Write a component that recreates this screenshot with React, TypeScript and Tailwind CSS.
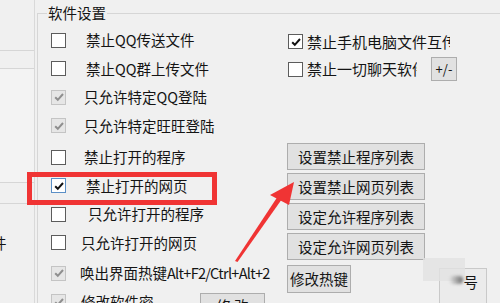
import React from 'react';

type CheckState = 'off' | 'on' | 'disabled' | 'focus';

const leftRows: { label: React.ReactNode; state: CheckState; row: string; text: string; extra?: boolean }[] = [
  { label: '禁止QQ传送文件', state: 'off', row: '', text: 'ml-[20px]' },
  { label: '禁止QQ群上传文件', state: 'off', row: '', text: 'ml-[20px]' },
  { label: '只允许特定QQ登陆', state: 'disabled', row: '', text: 'ml-[18px]' },
  { label: '只允许特定旺旺登陆', state: 'disabled', row: '', text: 'ml-[18px]' },
  { label: '禁止打开的程序', state: 'off', row: 'mt-[3px]', text: 'ml-[18px]' },
  { label: '禁止打开的网页', state: 'focus', row: '', text: 'ml-[20px]' },
  { label: '只允许打开的程序', state: 'off', row: '', text: 'ml-[22px]' },
  { label: '只允许打开的网页', state: 'off', row: '', text: 'ml-[15px]' },
  {
    label: (
      <>
        唤出界面热键<span className="tracking-[-0.7px]">Alt+F2/Ctrl+Alt+2</span>
      </>
    ),
    state: 'disabled',
    row: 'mt-[2px]',
    text: 'ml-[14px]',
  },
  { label: '修改软件密', state: 'disabled', row: '', text: 'ml-[15px] w-[119px]', extra: true },
];

const listButtons = ['设置禁止程序列表', '设置禁止网页列表', '设定允许程序列表', '设定允许网页列表'];

const CheckBox: React.FC<{ state: CheckState }> = ({ state }) => {
  const box =
    state === 'disabled'
      ? 'border-[#c4c4c4] bg-[#e6e6e6]'
      : state === 'focus'
        ? 'border-[#5b8fc6] bg-white'
        : 'border-[#5c5c5c] bg-white';
  const stroke = state === 'disabled' ? '#8f8f8f' : '#111';
  return (
    <div className={`w-[15px] h-[15px] shrink-0 border flex items-center justify-center ${box}`}>
      {state !== 'off' && (
        <svg width="12" height="12" viewBox="0 0 12 12">
          <path d="M2.2 6.2 L4.8 8.8 L10 3" fill="none" stroke={stroke} strokeWidth="2" />
        </svg>
      )}
    </div>
  );
};

const WinButton: React.FC<{ className?: string; children: React.ReactNode }> = ({ className, children }) => {
  return (
    <div
      className={`flex items-center justify-center bg-[#e1e1e1] border border-[#adadad] whitespace-nowrap ${className ?? ''}`}
    >
      {children}
    </div>
  );
};

export default function App() {
  return (
    <div
      className="relative w-[500px] h-[303px] overflow-hidden bg-[#f0f0f0] flex text-[14.5px] leading-[20px] text-[#141414]"
      style={{ fontFamily: '"Microsoft YaHei", "Noto Sans CJK SC", "Noto Sans", sans-serif' }}
    >
      {/* left pane, mostly cut off */}
      <div className="w-[35px] shrink-0 flex flex-col border-r border-[#d9d9d9]">
        <div className="h-[51px] border-b border-[#d6d6d6]" />
        <div className="h-[18px] border-b border-[#d6d6d6]" />
        <div className="h-[114px] border-b border-[#d6d6d6] bg-[#f3f3f3]" />
        <div className="h-[21px] border-b border-[#d6d6d6]" />
        <div className="mt-[29px] -ml-[8px] whitespace-nowrap">件</div>
      </div>

      {/* group box */}
      <fieldset className="ml-[2px] mt-[3px] flex-1 border-l border-t border-[#d6d6d6] min-w-0">
        <legend className="ml-[9px] px-[1px] leading-[20px]">软件设置</legend>
        <div className="flex">
          <div className="w-[249px] shrink-0 pl-[13px] pt-[3px] flex flex-col">
            {leftRows.map(({ label, state, row, text, extra }, index) => (
              <div key={index} className={`h-[28.5px] flex items-center ${row}`}>
                <CheckBox state={state} />
                <span className={`whitespace-nowrap ${text}`}>{label}</span>
                {extra && <WinButton className="w-[65px] h-[26px] mt-[8px]">修 改</WinButton>}
              </div>
            ))}
          </div>

          <div className="flex-1 pt-[4px] flex flex-col">
            <div className="h-[29px] flex items-center text-[15px]">
              <div className="ml-[1px]">
                <CheckBox state="on" />
              </div>
              <span className="ml-[4px] w-[143px] overflow-hidden whitespace-nowrap">禁止手机电脑文件互传</span>
            </div>
            <div className="h-[26px] flex items-center text-[15px]">
              <div className="ml-[1px]">
                <CheckBox state="off" />
              </div>
              <span className="ml-[4px] w-[110px] overflow-hidden whitespace-nowrap">禁止一切聊天软件</span>
              <WinButton className="ml-[14px] w-[26px] h-[24px] text-[13px]">+/-</WinButton>
            </div>

            <div className="mt-[61px] flex flex-col gap-[3px]">
              {listButtons.map((title, index) => (
                <WinButton key={index} className="w-[138px] h-[27px]">
                  {title}
                </WinButton>
              ))}
            </div>

            <div className="flex items-start">
              <WinButton className="mt-[5px] w-[64px] h-[28px]">修改热键</WinButton>
              <div className="relative ml-[88px] mt-[8px] w-[48px] h-[40px] border border-[#c9c9c9] bg-[#ebebeb] flex justify-end pr-[8px] pt-[3px]">
                号
              </div>
            </div>
          </div>
        </div>
      </fieldset>

      {/* watermark smear over the bottom-right button */}
      <div className="absolute left-[423px] top-[258px] w-[42px] h-[23px] bg-[#e2e2e2]/80" />
      <div className="absolute left-[449px] top-[276px] w-[14px] h-[8px] rounded-full bg-gradient-to-r from-transparent to-[#6f6f6f] blur-[1.5px]" />

      {/* red annotation box */}
      <div className="absolute left-[27px] top-[172px] w-[190px] h-[33px] border-[5px] border-[#f03434]" />

      {/* red arrow */}
      <svg className="absolute left-0 top-0" width="500" height="303" viewBox="0 0 500 303">
        <polygon points="235,261 237.5,262 282,199 278,196" fill="#f03434" />
        <polygon points="294,182 270,195 289,205" fill="#f03434" />
      </svg>
    </div>
  );
}
